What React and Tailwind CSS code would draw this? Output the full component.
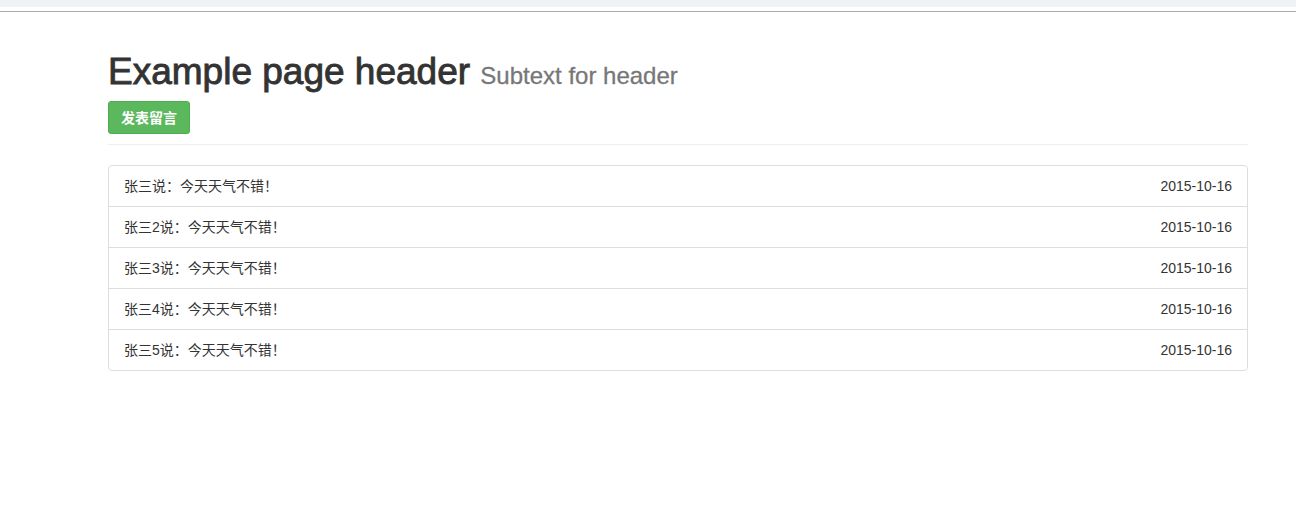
export default function App() {
  const rows = [
    "张三说：今天天气不错！",
    "张三2说：今天天气不错！",
    "张三3说：今天天气不错！",
    "张三4说：今天天气不错！",
    "张三5说：今天天气不错！",
  ];
  const font = { fontFamily: '"Liberation Sans", "Noto Sans CJK SC", sans-serif' };
  return (
    <div className="w-[1296px] h-[507px] bg-white text-[#333]" style={font}>
      <div className="h-[7px] bg-[#f1f2f4]" />
      <div className="h-[4px] bg-white" />
      <div className="h-px bg-[#ababab]" />
      <div className="ml-[108px] w-[1140px]">
        <div className="mt-[40px] pb-[10px] border-b border-[#eee]">
          <h1 className="text-[37px] leading-[40px] font-normal text-[#333] whitespace-nowrap [-webkit-text-stroke:0.9px_#333]">
            Example page header{" "}
            <span className="text-[24px] text-[#777] [-webkit-text-stroke:0.3px_#777]">Subtext for header</span>
          </h1>
          <button className="mt-[5px] h-[33px] px-[12px] rounded-[3px] bg-[#5cb85c] border border-[#4cae4c] text-white text-[14px] font-bold leading-none">
            发表留言
          </button>
        </div>
        <div className="mt-[20px] border border-[#ddd] rounded-[4px]">
          {rows.map((r, i) => (
            <div
              key={i}
              className={
                "h-[40px] px-[15px] flex items-center justify-between text-[14px] text-[#333] " +
                (i > 0 ? "border-t border-[#ddd] h-[41px]" : "")
              }
            >
              <span>{r}</span>
              <span>2015-10-16</span>
            </div>
          ))}
        </div>
      </div>
    </div>
  );
}
